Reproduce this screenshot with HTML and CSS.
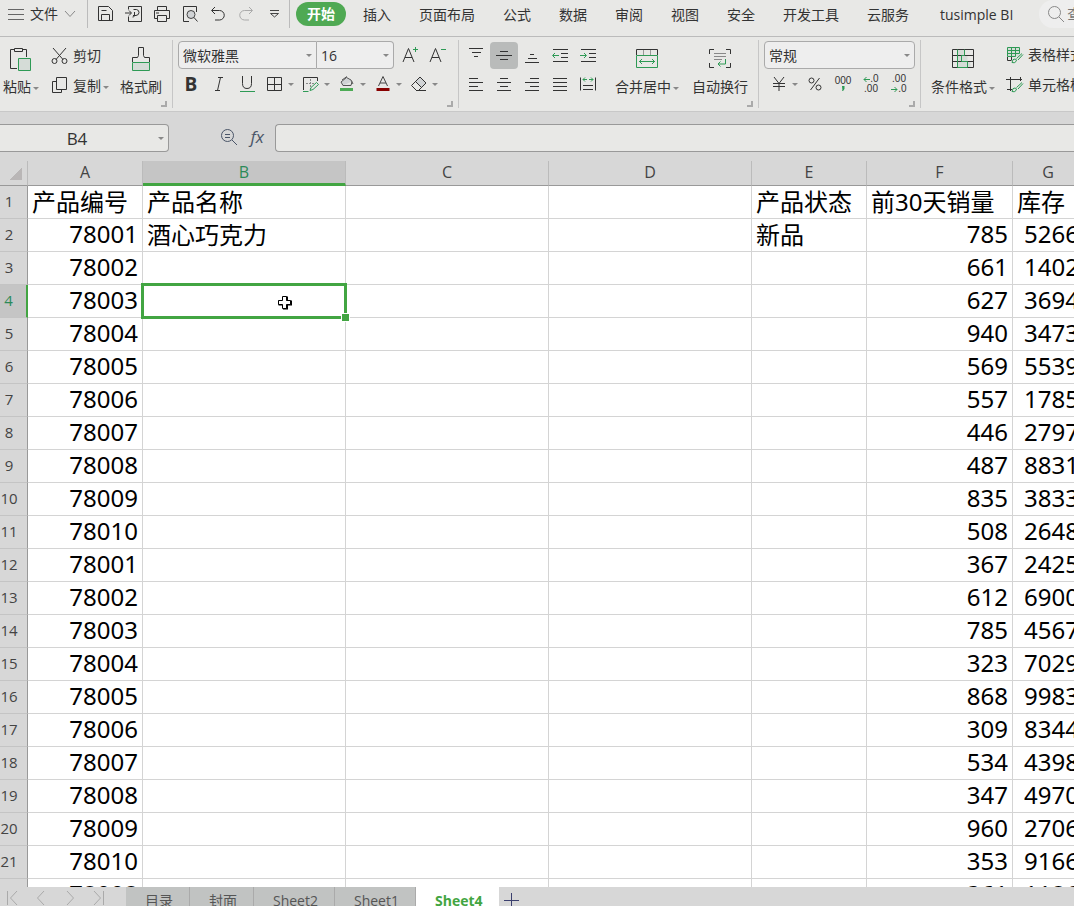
FILE: index.html
```html
<!DOCTYPE html>
<html lang="zh-CN">
<head>
    <meta charset="UTF-8">
    <meta name="viewport" content="width=device-width, initial-scale=1.0">
    <title>产品销量 - 表格</title>
    <link rel="stylesheet" href="styles.css">
</head>
<body>
    <!-- 菜单栏 -->
    <header class="topbar">
        <button class="file_bt">
            <svg width="16" height="12" viewBox="0 0 16 12"><path d="M0 1.500h16M0 6.500h16M0 11.500h16" stroke="#666"/></svg>
            <span>文件</span>
            <svg width="12" height="8" viewBox="0 0 12 8"><path d="M1 1l5 5.500L11 1" stroke="#888"/></svg>
        </button>
        <div class="quick">
            <button aria-label="保存"><svg width="18" height="18" viewBox="0 0 18 18"><path d="M1.500 1.500h10l4 4v10h-14zM4.500 15.500v-6h8v6M4.500 5.500h5" stroke="#333"/></svg></button>
            <button aria-label="输出"><svg width="18" height="18" viewBox="0 0 18 18"><path d="M3.500 4.500v-3h13v15h-13v-5M0 8h6M4 5.500L6.500 8 4 10.500M8.500 4.500h3q2.500.5 2.500 3t-3 3H8M9.500 7v3.500q-.5 2-2 1.500" stroke="#333"/></svg></button>
            <button aria-label="打印"><svg width="18" height="18" viewBox="0 0 18 18"><path d="M4.500 5.500v-4h9v4M4.500 13.500h-3v-8h15v8h-3M4.500 10.500h9v6h-9zM3 8h3" stroke="#333"/></svg></button>
            <button aria-label="打印预览"><svg width="18" height="18" viewBox="0 0 18 18"><path d="M8 16.500H2.500v-15h13V7" stroke="#333"/><circle cx="10" cy="9.500" r="4" fill="#d0d3d5" stroke="#444"/><path d="M13 12.500l3.500 4" stroke="#333"/></svg></button>
            <button aria-label="撤销"><svg width="18" height="18" viewBox="0 0 18 18"><path d="M6 2L2.500 5.500 6 9M3 5.500h7.500a4.500 4.500 0 0 1 0 9.500H6" stroke="#333"/></svg></button>
            <button aria-label="恢复"><svg width="18" height="18" viewBox="0 0 18 18"><path d="M12 2l3.500 3.500L12 9M15 5.500H7.500a4.500 4.500 0 0 0 0 9.500H12" stroke="#aaa"/></svg></button>
            <button aria-label="更多"><svg width="18" height="18" viewBox="0 0 18 18"><path d="M5 5.500h9M5.500 8.500h8L9.500 12z" stroke="#444"/></svg></button>
        </div>
        <nav class="menu">
            <a href="#" class="on">开始</a>
            <a href="#">插入</a>
            <a href="#">页面布局</a>
            <a href="#">公式</a>
            <a href="#">数据</a>
            <a href="#">审阅</a>
            <a href="#">视图</a>
            <a href="#">安全</a>
            <a href="#">开发工具</a>
            <a href="#">云服务</a>
            <a href="#" class="plugin">tusimple BI</a>
        </nav>
        <button class="search">
            <svg width="18" height="18" viewBox="0 0 18 18"><circle cx="7.500" cy="7.500" r="6" stroke="#888"/><path d="M12 12l5 5" stroke="#888"/></svg>
            <span>查找</span>
        </button>
    </header>

    <!-- 工具栏 -->
    <section class="ribbon">
        <div class="group clip">
            <button class="big">
                <svg width="24" height="26" viewBox="0 0 24 26"><path d="M8 22.500H1.500v-19h4M13.500 3.500h4V11M5.500 2.500h8v3h-8z" stroke="#333"/><path d="M9.500 12.500h12v12h-12z" fill="#d5dcd7" stroke="#2e9a55"/></svg>
                <span class="drop">粘贴</span>
            </button>
            <div class="rows">
                <button class="item">
                    <svg width="18" height="18" viewBox="0 0 18 18"><path d="M2 1l10 11.500M15 1L5 12.500" stroke="#333"/><circle cx="3.500" cy="14" r="2.500" stroke="#333"/><circle cx="13.500" cy="14" r="2.500" stroke="#333"/></svg>
                    <span>剪切</span>
                </button>
                <button class="item">
                    <svg width="18" height="18" viewBox="0 0 18 18"><path d="M5.500 .5h10v12h-10zM5.500 4.500h-4v11h9v-3" stroke="#333"/></svg>
                    <span class="drop">复制</span>
                </button>
            </div>
            <button class="big">
                <svg width="22" height="26" viewBox="0 0 22 26"><path d="M2.500 16v-4.500h5l1-2v-8h5v8l1 2h5V16" stroke="#333"/><path d="M2.500 16.500h17v8h-17z" fill="#d5dcd7" stroke="#2e9a55"/></svg>
                <span>格式刷</span>
            </button>
            <i class="corner"></i>
        </div>

        <div class="group font">
            <div class="line">
                <div class="combo family"><select aria-label="字体"><option>微软雅黑</option></select></div>
                <div class="combo size"><select aria-label="字号"><option>16</option></select></div>
                <button class="tool" aria-label="增大字号"><svg width="18" height="18" viewBox="0 0 18 18"><path d="M2 16L7.500 2.500 13 16M4 11.500h7" stroke="#333"/><path d="M12 3.500h5M14.500 1v5" stroke="#2e9a55"/></svg></button>
                <button class="tool" aria-label="减小字号"><svg width="18" height="18" viewBox="0 0 18 18"><path d="M1 16L6.500 2.500 12 16M3 11.500h7" stroke="#333"/><path d="M12 3.500h5" stroke="#2e9a55"/></svg></button>
            </div>
            <div class="line marks">
                <button class="tool bold">B</button>
                <button class="tool" aria-label="斜体"><svg width="18" height="18" viewBox="0 0 18 18"><path d="M8 2.500h5M5 15.500h5M10.500 2.500l-3 13" stroke="#333"/></svg></button>
                <button class="tool" aria-label="下划线"><svg width="18" height="18" viewBox="0 0 18 18"><path d="M4.500 1v7.500q0 5 4.500 5t4.500-5V1" stroke="#333"/><path d="M2 16.500h15" stroke="#2e9a55"/></svg></button>
                <button class="tool drop" aria-label="边框"><svg width="18" height="18" viewBox="0 0 18 18"><path d="M1.500 2.500h14v13h-14zM8.500 2.500v13M1.500 9.500h14" stroke="#333"/></svg></button>
                <button class="tool drop" aria-label="绘图边框"><svg width="18" height="18" viewBox="0 0 18 18"><path d="M1.500 15V2.500h14V6" stroke="#333"/><path d="M8.500 4v10M4 8.500h8" stroke="#888" stroke-dasharray="2 1"/><path d="M1 16.500h5.500M8 15.500l1-3 5.500-5 2 2-5.500 5z" stroke="#2e9a55"/></svg></button>
                <button class="tool drop" aria-label="填充颜色"><svg width="18" height="18" viewBox="0 0 18 18"><path d="M5 10.500L3 7l5.500-4.500L13 5l2 4M5 10.500h8l1-4M4 5l5-3.500" fill="#d0d3d5" stroke="#555"/><path d="M2 14.500h13" stroke="#4dab55" stroke-width="3"/></svg></button>
                <button class="tool drop" aria-label="字体颜色"><svg width="18" height="18" viewBox="0 0 18 18"><path d="M4.500 11L9 1.500 13.500 11M6 8h6" stroke="#444"/><path d="M2.500 14.500h13" stroke="#800" stroke-width="3"/></svg></button>
                <button class="tool drop" aria-label="清除"><svg width="18" height="18" viewBox="0 0 18 18"><path d="M5.500 6.500L10 2l6 6-4.500 4.500z" fill="#d0d3d5"/><path d="M1.500 10.500L10 2l6 6-7.500 7.500h-2zM5.500 6.500l6 6M6 15.500h10" stroke="#333"/></svg></button>
            </div>
            <i class="corner"></i>
        </div>

        <div class="group align">
            <div class="rows">
                <div class="line">
                    <button class="tool" aria-label="顶端对齐"><svg width="18" height="18" viewBox="0 0 18 18"><path d="M2 2.500h14M5 6.500h9M7 10.500h4" stroke="#333"/></svg></button>
                    <button class="tool on" aria-label="垂直居中"><svg width="18" height="18" viewBox="0 0 18 18"><path d="M5 5.500h8M1 9.500h16M5 13.500h8" stroke="#333"/></svg></button>
                    <button class="tool" aria-label="底端对齐"><svg width="18" height="18" viewBox="0 0 18 18"><path d="M7 8.500h4M5 12.500h9M2 16.500h14" stroke="#333"/></svg></button>
                    <button class="tool" aria-label="减少缩进"><svg width="18" height="18" viewBox="0 0 18 18"><path d="M2 3.500h15M10 7.500h7M10 11.500h7M2 15.500h15" stroke="#333"/><path d="M8 9.500H2M4 7L1.500 9.500 4 12" stroke="#2e9a55"/></svg></button>
                    <button class="tool" aria-label="增加缩进"><svg width="18" height="18" viewBox="0 0 18 18"><path d="M2 3.500h15M10 7.500h7M10 11.500h7M2 15.500h15" stroke="#333"/><path d="M1 9.500h6M5 7l2.500 2.500L5 12" stroke="#2e9a55"/></svg></button>
                </div>
                <div class="line">
                    <button class="tool" aria-label="左对齐"><svg width="18" height="18" viewBox="0 0 18 18"><path d="M2 3.500h9M2 7.500h14M2 11.500h9M2 15.500h14" stroke="#333"/></svg></button>
                    <button class="tool" aria-label="居中"><svg width="18" height="18" viewBox="0 0 18 18"><path d="M5 3.500h8M2 7.500h14M5 11.500h8M2 15.500h14" stroke="#333"/></svg></button>
                    <button class="tool" aria-label="右对齐"><svg width="18" height="18" viewBox="0 0 18 18"><path d="M7 3.500h9M2 7.500h14M7 11.500h9M2 15.500h14" stroke="#333"/></svg></button>
                    <button class="tool" aria-label="两端对齐"><svg width="18" height="18" viewBox="0 0 18 18"><path d="M2 3.500h14M2 7.500h14M2 11.500h14M2 15.500h14" stroke="#333"/></svg></button>
                    <button class="tool" aria-label="分散对齐"><svg width="18" height="18" viewBox="0 0 18 18"><path d="M1.500 2.500v13M16.500 2.500v13M4 10.500h10M4 14.500h10" stroke="#333"/><path d="M4 4.500h4M10 4.500h4M6 2.500l-2 2 2 2M12 2.500l2 2-2 2" stroke="#2e9a55"/></svg></button>
                </div>
            </div>
            <button class="big">
                <svg width="24" height="22" viewBox="0 0 24 22"><path d="M1.500 7V1.500h21V7" stroke="#333"/><path d="M8.500 2v5M15.500 2v5" stroke="#999"/><path d="M1.500 7.500h21v12h-21zM4 13.500h16M7 11l-2.500 2.500L7 16M17 11l2.500 2.500L17 16" stroke="#2e9a55"/></svg>
                <span class="drop">合并居中</span>
            </button>
            <button class="big">
                <svg width="24" height="22" viewBox="0 0 24 22"><path d="M1.500 6V1.500H6M18 1.500h4.500V6M1.500 15v4.500H6M18 19.500h4.500V15" stroke="#333"/><path d="M6 5.500h12M6 8.500h12M6 11.500h8" stroke="#888"/><path d="M17.500 11v5H10M12.500 13.500L10 16l2.500 2.500" stroke="#2e9a55"/></svg>
                <span>自动换行</span>
            </button>
            <i class="corner"></i>
        </div>

        <div class="group number">
            <div class="line">
                <div class="combo format"><select aria-label="数字格式"><option>常规</option></select></div>
            </div>
            <div class="line">
                <button class="tool drop" aria-label="货币"><svg width="18" height="18" viewBox="0 0 18 18"><path d="M4 2l5 6.500L14 2M9 8.500V16M3 8.500h12M3 11.500h12" stroke="#333"/></svg></button>
                <button class="tool" aria-label="百分比"><svg width="18" height="18" viewBox="0 0 18 18"><circle cx="5.500" cy="5.500" r="2.500" stroke="#333"/><circle cx="12.500" cy="12.500" r="2.500" stroke="#333"/><path d="M13.500 3l-9 12" stroke="#333"/></svg></button>
                <button class="tool digits"><span>000</span><svg width="4" height="6" viewBox="0 0 4 6"><path d="M1 0h2v3L1.500 5" fill="#2e9a55" stroke="#2e9a55"/></svg></button>
                <button class="tool digits" aria-label="增加小数位"><span><svg width="7" height="7" viewBox="0 0 7 7"><path d="M7 3.500H1M3.500 1L1 3.500 3.500 6" stroke="#2e9a55"/></svg>.0</span><span>.00</span></button>
                <button class="tool digits" aria-label="减少小数位"><span>.00</span><span><svg width="7" height="7" viewBox="0 0 7 7"><path d="M0 3.500h6M3.500 1L6 3.500 3.500 6" stroke="#2e9a55"/></svg>.0</span></button>
            </div>
            <i class="corner"></i>
        </div>

        <div class="group style">
            <button class="big">
                <svg width="24" height="22" viewBox="0 0 24 22"><path d="M6.500 1.500h7v6h3v6h3v6h-13v-12z" fill="#d5dcd7"/><path d="M1.500 1.500h21v18h-21zM1.500 7.500h21M1.500 13.500h21" stroke="#333"/><path d="M6.500 1.500v18M13.500 1.500v6h-3v6h6v6h-10" stroke="#2e9a55"/></svg>
                <span class="drop">条件格式</span>
            </button>
            <div class="rows">
                <button class="item">
                    <svg width="18" height="18" viewBox="0 0 18 18"><path d="M1.500 1.500h12v9h-12z" fill="#d5dcd7"/><path d="M1.500 1.500h12v6M1.500 1.500v9h8M5.500 1.500v9M9.500 1.500v9M1.500 4.500h12M1.500 7.500h12" stroke="#2e9a55"/><path d="M1.500 11v3.500h4M5.500 11v3" stroke="#333"/><path d="M16 7.500L10.500 12.500M6 16.500q.5-4 3-3.500t1 2.500-4 1z" stroke="#2e9a55"/><path d="M17 8.500L12 14" stroke="#2e9a55"/></svg>
                    <span class="drop">表格样式</span>
                </button>
                <button class="item">
                    <svg width="18" height="18" viewBox="0 0 18 18"><path d="M4.500 1v14M0 3.500h16M14.500 1v4M1 13.500h5" stroke="#333"/><path d="M16 6.500L10.500 11.500M6 15.500q.5-4 3-3.500t1 2.500-4 1zM17 7.500L12 13" stroke="#2e9a55"/></svg>
                    <span class="drop">单元格样式</span>
                </button>
            </div>
        </div>
    </section>

    <!-- 编辑栏 -->
    <section class="formula">
        <div class="combo namebox"><input type="text" value="B4" aria-label="名称框"></div>
        <div class="fx">
            <button aria-label="浏览公式"><svg width="18" height="18" viewBox="0 0 18 18"><circle cx="7.500" cy="7.500" r="6" stroke="#4a5568"/><path d="M12 12l5 5M5 6.500h5M5 9.500h5" stroke="#4a5568"/></svg></button>
            <button class="fn"><em>fx</em></button>
        </div>
        <input type="text" class="fbar" aria-label="编辑栏">
    </section>

    <!-- 工作表 -->
    <main class="sheet">
        <table>
            <colgroup>
                <col class="c_no"><col class="c_a"><col class="c_b"><col class="c_b"><col class="c_b"><col class="c_a"><col class="c_f"><col class="c_g">
            </colgroup>
            <thead>
                <tr>
                    <th class="all"></th>
                    <th>A</th>
                    <th class="cur">B</th>
                    <th>C</th>
                    <th>D</th>
                    <th>E</th>
                    <th>F</th>
                    <th>G</th>
                </tr>
            </thead>
            <tbody id="rows"></tbody>
        </table>
    </main>

    <!-- 工作表标签 -->
    <footer class="tabs">
        <div class="arrows">
            <button aria-label="第一个"><svg width="14" height="16" viewBox="0 0 14 16"><path d="M1.500 1v14M11 1L4.500 8l6.500 7" stroke="#aaa"/></svg></button>
            <button aria-label="上一个"><svg width="14" height="16" viewBox="0 0 14 16"><path d="M9 1L2.500 8 9 15" stroke="#aaa"/></svg></button>
            <button aria-label="下一个"><svg width="14" height="16" viewBox="0 0 14 16"><path d="M3 1l6.500 7L3 15" stroke="#aaa"/></svg></button>
            <button aria-label="最后一个"><svg width="14" height="16" viewBox="0 0 14 16"><path d="M10.500 1v14M1 1l6.500 7L1 15" stroke="#aaa"/></svg></button>
        </div>
        <button class="tab">目录</button>
        <button class="tab">封面</button>
        <button class="tab">Sheet2</button>
        <button class="tab">Sheet1</button>
        <button class="tab on">Sheet4</button>
        <button class="add" aria-label="新建"><svg width="15" height="15" viewBox="0 0 15 15"><path d="M0 7.500h15M7.500 0v15" stroke="#3b3f6e"/></svg></button>
    </footer>

    <script>
        var sales = [785, 661, 627, 940, 569, 557, 446, 487, 835, 508, 367, 612, 785, 323, 868, 309, 534, 347, 960, 353, 361];
        var stock = [5266, 1402, 3694, 3473, 5539, 1785, 2797, 8831, 3833, 2648, 2425, 6900, 4567, 7029, 9983, 8344, 4398, 4970, 2706, 9166, 1186];
        var data = [["产品编号", "产品名称", "", "", "产品状态", "前30天销量", "库存"]];
        for (var i = 0; i < sales.length; i++) {
            var no = i == 20 ? 78008 : 78001 + i % 10;
            data.push([no, i == 0 ? "酒心巧克力" : "", "", "", i == 0 ? "新品" : "", sales[i], stock[i]]);
        }

        var html = "";
        for (var r = 0; r < data.length; r++) {
            html += '<tr><th' + (r == 3 ? ' class="cur"' : '') + '>' + (r + 1) + '</th>';
            for (var c = 0; c < data[r].length; c++) {
                var v = data[r][c];
                if (r == 3 && c == 1) {
                    // 当前单元格和鼠标
                    html += '<td class="active"><div class="box"></div><svg class="mouse" width="16" height="16" viewBox="0 0 16 16"><path d="M6 1.500h5v4h4v5h-4v4H6v-4H1.500v-5H6z" fill="#000"/><path d="M5.500 1.500h4v4h4v4h-4v4h-4v-4h-4v-4h4z" fill="#fff" stroke="#000"/></svg></td>';
                } else {
                    html += '<td' + (typeof v == "number" ? ' class="num"' : '') + '>' + v + '</td>';
                }
            }
            html += '</tr>';
        }
        document.getElementById("rows").innerHTML = html;
    </script>
</body>
</html>
```
FILE: styles.css
```css
*{
    padding: 0;
    margin: 0;
    box-sizing: border-box;
}
body{
    height: 100vh;
    display: flex;
    flex-direction: column;
    overflow: hidden;
    background: #d7d7d7;
    color: #333;
    font-family: "Open Sans", "Noto Sans CJK SC", sans-serif;
    font-size: 14px;
    line-height: 20px;
}
button, input, select{
    font: inherit;
    color: inherit;
    border: none;
    background: none;
    white-space: nowrap;
}
svg{
    display: block;
    flex: none;
    fill: none;
}
a{
    color: inherit;
    text-decoration: none;
}

/* 菜单栏 */
.topbar{
    flex: none;
    display: flex;
    align-items: flex-start;
    height: 37px;
    background: #e8e8e6;
    border-bottom: 1px solid #bbb;
    overflow: hidden;
}
.file_bt{
    flex: none;
    display: flex;
    align-items: center;
    gap: 6px;
    width: 88px;
    height: 28px;
    padding-left: 8px;
    border-right: 1px solid #bbb;
}
.quick{
    flex: none;
    display: flex;
    width: 202px;
    height: 28px;
    padding-left: 4px;
    border-right: 1px solid #bbb;
}
.quick button{
    width: 28px;
    padding-left: 5px;
}
.menu{
    flex: none;
    display: flex;
    margin-left: 6px;
    padding-top: 2px;
}
.menu a{
    padding: 3px 14px;
    white-space: nowrap;
}
.menu .on{
    height: 24px;
    padding: 2px 11px;
    margin-right: 3px;
    border-radius: 12px;
    background: #4fa953;
    color: #fff;
    font-weight: bold;
}
.menu .plugin{
    padding-left: 17px;
}
.search{
    flex: none;
    display: flex;
    align-items: center;
    gap: 2px;
    width: 120px;
    height: 28px;
    margin-left: 12px;
    padding-left: 8px;
    border-radius: 14px;
    background: #eee;
    color: #777;
}

/* 工具栏 */
.ribbon{
    flex: none;
    display: flex;
    height: 75px;
    background: #e8e8e6;
    border-bottom: 1px solid #c8c8c8;
    overflow: hidden;
}
.group{
    flex: none;
    position: relative;
    height: 68px;
    margin-top: 3px;
    border-right: 1px solid #c6c6c6;
}
.group:last-child{
    border: none;
}
.corner{
    position: absolute;
    right: 5px;
    bottom: 1px;
    width: 6px;
    height: 6px;
    border-right: 2px solid #aaa;
    border-bottom: 2px solid #aaa;
}
.clip, .align, .style{
    display: flex;
}
.clip{
    width: 173px;
    padding-left: 3px;
}
.font{
    width: 286px;
    padding-left: 5px;
}
.align{
    width: 300px;
    padding-left: 3px;
}
.number{
    width: 162px;
    padding-left: 5px;
}
.style{
    padding-left: 10px;
}
.line{
    display: flex;
    align-items: center;
    height: 30px;
}
.line + .line{
    height: 28px;
}
.big{
    height: 60px;
    display: flex;
    flex-direction: column;
    align-items: center;
    justify-content: flex-end;
    gap: 5px;
    padding-bottom: 3px;
}
.clip .rows{
    margin: 0 11px 0 12px;
    padding-top: 1px;
}
.align .big{
    margin-left: 13px;
    gap: 7px;
}
.style .big{
    gap: 7px;
    margin-right: 11px;
}
.item{
    display: flex;
    align-items: center;
    gap: 4px;
    height: 30px;
}
/* 下拉小三角 */
.drop::after, .combo::after{
    content: "";
    display: inline-block;
    border: 3px solid transparent;
    border-top: 3px solid #888;
    border-bottom: none;
    margin-left: 2px;
    vertical-align: middle;
}
.combo{
    position: relative;
    height: 28px;
    background: #eee;
    border: 1px solid #aaa;
}
.combo::after{
    position: absolute;
    right: 4px;
    top: 12px;
}
.combo select, .combo input{
    appearance: none;
    width: 100%;
    height: 26px;
    padding-left: 4px;
}
.combo select{
    padding-top: 2px;
}
.family{
    width: 139px;
    border-radius: 4px 0 0 4px;
}
.size{
    width: 77px;
    border-left: none;
    border-radius: 0 4px 4px 0;
    margin-right: 2px;
}
.format{
    width: 151px;
    border-radius: 4px;
}
.tool{
    display: flex;
    align-items: center;
    justify-content: center;
    width: 28px;
    height: 27px;
}
.tool.on{
    background: #b9bbba;
    border-radius: 4px;
}
.marks{
    margin-left: -1px;
}
.marks .drop{
    width: 36px;
    padding-left: 2px;
}
.tool.drop::after{
    margin-left: 4px;
}
.number .drop{
    width: 37px;
    padding-left: 2px;
}
.bold{
    font-size: 19px;
    font-weight: bold;
}
.digits{
    flex-direction: column;
    font-family: "Liberation Sans", sans-serif;
    font-size: 10px;
    line-height: 10px;
}
.digits span{
    display: flex;
    align-items: center;
}

/* 编辑栏 */
.formula{
    flex: none;
    display: flex;
    height: 49px;
    padding-top: 12px;
}
.namebox{
    width: 169px;
    background: #e8e8e6;
    border-color: #999;
    border-left: none;
    border-radius: 0 4px 4px 0;
}
.namebox input{
    padding: 0 14px 0 0;
    text-align: center;
    font-size: 17px;
}
.fx{
    display: flex;
    align-items: center;
    justify-content: flex-end;
    gap: 13px;
    width: 106px;
    height: 26px;
    padding-right: 11px;
}
.fn{
    font-size: 17px;
    color: #4a5568;
}
.fbar{
    flex: 1;
    min-width: 0;
    height: 28px;
    background: #e8e8e6;
    border: 1px solid #999;
    border-right: none;
    border-radius: 4px 0 0 4px;
    padding-left: 6px;
}

/* 工作表 */
.sheet{
    flex: 1;
    min-height: 0;
    overflow: hidden;
}
table{
    width: 1084px;
    table-layout: fixed;
    border-collapse: separate;
    border-spacing: 0;
}
.c_no{
    width: 28px;
}
.c_a{
    width: 115px;
}
.c_b{
    width: 203px;
}
.c_f{
    width: 146px;
}
.c_g{
    width: 71px;
}
th{
    font-size: 15px;
    font-weight: normal;
    color: #444;
    background: #d7d7d7;
}
thead th{
    height: 25px;
    font-size: 16px;
    line-height: 22px;
    padding-bottom: 2px;
    border-right: 1px solid #bbb;
    border-bottom: 1px solid #999;
}
thead .cur{
    background: #c5c5c5;
    color: #2c8a58;
    padding-bottom: 0;
    border-bottom: 3px solid #42a542;
}
.all{
    background: linear-gradient(135deg, transparent 50%, #b9b6b6 50%) 10px 7px / 12px 12px no-repeat #d7d7d7;
}
tbody th{
    border-right: 1px solid #999;
    border-bottom: 1px solid #c4c4c4;
    padding: 0 8px 2px 0;
    text-indent: -1px;
}
tbody .cur{
    background: #c5c5c5;
    color: #2c8a58;
    border-right: 2px solid #42a542;
}
td{
    height: 33px;
    padding: 0 4px;
    background: #fff;
    border-right: 1px solid #d4d4d4;
    border-bottom: 1px solid #d4d4d4;
    color: #000;
    font-family: "Noto Sans", "Noto Sans CJK SC", sans-serif;
    font-size: 24px;
    line-height: 32px;
    white-space: nowrap;
}
.num{
    text-align: right;
    line-height: 30px;
    padding-bottom: 2px;
}
.active{
    position: relative;
}
.box{
    position: absolute;
    inset: -2px;
    border: 3px solid #42a542;
}
.box::after{
    content: "";
    position: absolute;
    right: -6px;
    bottom: -6px;
    width: 7px;
    height: 7px;
    background: #42a542;
    border: 1px solid #fff;
}
.mouse{
    position: absolute;
    left: 134px;
    top: 10px;
}

/* 工作表标签 */
.tabs{
    flex: none;
    display: flex;
    height: 19px;
    overflow: hidden;
}
.arrows{
    display: flex;
    gap: 15px;
    width: 126px;
    padding: 3px 0 0 6px;
}
.arrows button{
    height: 16px;
}
.tab{
    height: 27px;
    padding: 0 16px 0 19px;
    background: #c1c3c2;
    border-right: 1px solid #aaa;
    color: #555;
}
.tab.on{
    background: #fff;
    border: none;
    color: #42a542;
    font-weight: bold;
}
.add{
    height: 27px;
    padding: 0 5px;
}
```
